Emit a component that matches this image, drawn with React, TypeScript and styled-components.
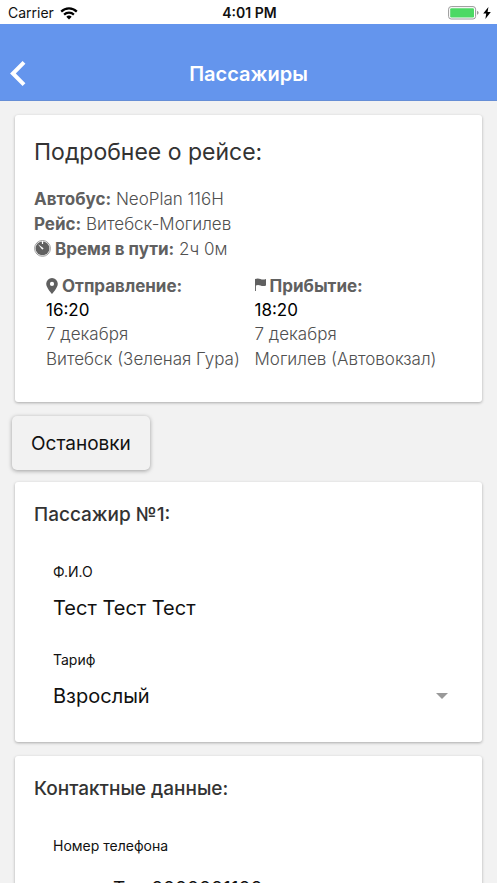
import React from "react";
import styled, { createGlobalStyle } from "styled-components";

const GlobalStyle = createGlobalStyle`
  *, *::before, *::after { box-sizing: border-box; }
  body { margin: 0; background: #f2f2f2; }
  body, button, input, select { font-family: Inter, "Liberation Sans", sans-serif; }
  h1, h2, p { margin: 0; }
`;

const Screen = styled.div`
  display: flex;
  flex-direction: column;
  height: 100vh;
  background: #f2f2f2;
`;

const StatusBar = styled.div`
  display: grid;
  grid-template-columns: 1fr auto 1fr;
  align-items: center;
  flex: none;
  height: 24px;
  padding: 2px 6px 0 8px;
  background: #fff;
  color: #111;
  font-size: 14px;
  line-height: 20px;
`;

const StatusGroup = styled.div<{ $end?: boolean }>`
  display: flex;
  align-items: center;
  gap: ${({ $end }) => ($end ? 4 : 6)}px;
  justify-content: ${({ $end }) => ($end ? "flex-end" : "flex-start")};
`;

const Clock = styled.span`
  font-weight: 600;
`;

const NavBar = styled.header`
  display: grid;
  grid-template-columns: 48px 1fr 48px;
  align-items: center;
  flex: none;
  height: 77px;
  padding-top: 24px;
  background: #6495ed;
  border-bottom: 1px solid #668ed6;
  color: #fff;
`;

const BackButton = styled.button`
  display: flex;
  align-items: center;
  height: 48px;
  padding: 0 0 0 10px;
  border: 0;
  background: none;
  color: inherit;
`;

const NavTitle = styled.h1`
  text-align: center;
  font-size: 20px;
  line-height: 24px;
  font-weight: 600;
`;

const Content = styled.main`
  flex: 1;
  min-height: 0;
  overflow-y: auto;
  scrollbar-width: none;
  padding: 14px 15px;
`;

const Card = styled.section`
  padding: 20px 19px;
  margin-bottom: 14px;
  border-radius: 3px;
  background: #fff;
  box-shadow: 0 1px 3px rgba(0, 0, 0, 0.3);
`;

const CardTitle = styled.h2<{ $large?: boolean }>`
  margin-bottom: ${({ $large }) => ($large ? 18 : 34)}px;
  color: #333;
  font-size: ${({ $large }) => ($large ? 23 : 19)}px;
  line-height: ${({ $large }) => ($large ? 34 : 26)}px;
  font-weight: ${({ $large }) => ($large ? 400 : 500)};
`;

const Line = styled.p`
  color: #505050;
  font-size: 17px;
  line-height: 25px;
  font-weight: 300;
  white-space: nowrap;
`;

const Label = styled.strong`
  color: #606060;
  font-weight: 700;
`;

const IconLine = styled(Line)`
  display: flex;
  align-items: center;
  gap: 4px;
`;

const Stops = styled.div`
  display: grid;
  grid-template-columns: 1fr 1fr;
  gap: 12px;
  padding: 12px 12px 10px;
`;

const Stop = styled.div`
  min-width: 0;
`;

const Time = styled.time`
  display: block;
  color: #000;
  font-size: 17px;
  line-height: 23px;
`;

const StopsButton = styled.button`
  display: block;
  height: 54px;
  padding: 0 19px;
  margin: 0 0 12px -3px;
  border: 0;
  border-radius: 5px;
  background: #f2f2f2;
  box-shadow: 0 1px 4px rgba(0, 0, 0, 0.35);
  color: #111;
  font-size: 19px;
`;

const Fields = styled.div`
  display: flex;
  flex-direction: column;
  gap: 22px;
  padding: 0 15px 6px 19px;
`;

const Field = styled.div<{ $roomy?: boolean }>`
  display: flex;
  flex-direction: column;
  gap: ${({ $roomy }) => ($roomy ? 12 : 6)}px;
`;

const FieldLabel = styled.label`
  color: #111;
  font-size: 14px;
  line-height: 20px;
`;

const Input = styled.input<{ $indented?: boolean }>`
  width: 100%;
  height: 40px;
  padding: 0 0 0 ${({ $indented }) => ($indented ? 60 : 0)}px;
  border: 0;
  background: none;
  color: #111;
  font-size: ${({ $indented }) => ($indented ? 19 : 20)}px;
`;

const SelectBox = styled.div`
  display: grid;
  grid-template-columns: 1fr 12px;
  align-items: center;
`;

const Select = styled.select`
  appearance: none;
  grid-area: 1 / 1 / 2 / 3;
  width: 100%;
  height: 40px;
  padding: 0;
  border: 0;
  background: none;
  color: #111;
  font-size: 20px;
`;

const Arrow = styled.svg`
  grid-area: 1 / 2;
  pointer-events: none;
`;

const WifiIcon = () => (
  <svg width="18" height="13" viewBox="0 0 18 13" fill="none" stroke="#000" strokeWidth="2.2" aria-hidden="true">
    <path d="M1.2 4.6a11 11 0 0 1 15.6 0M4.1 7.6a7 7 0 0 1 9.8 0" />
    <path d="M9 12.5 6.3 9.8a3.9 3.9 0 0 1 5.4 0Z" fill="#000" stroke="none" />
  </svg>
);

const BatteryIcon = () => (
  <svg width="31" height="14" viewBox="0 0 31 14" aria-hidden="true">
    <rect x="0.6" y="0.6" width="27" height="12.4" rx="2.6" fill="#fff" stroke="#999" />
    <rect x="2.2" y="2.2" width="23.8" height="9.2" rx="1.2" fill="#4cd964" />
    <path d="M29 4.8q1.6.4 1.6 2t-1.6 2Z" fill="#999" />
  </svg>
);

const BoltIcon = () => (
  <svg width="8" height="12" viewBox="0 0 8 12" aria-hidden="true">
    <path d="M5.4 0 .2 6.6h3L2.4 12 7.8 5H4.6Z" fill="#000" />
  </svg>
);

const BackIcon = () => (
  <svg width="16" height="26" viewBox="0 0 16 26" fill="none" stroke="#fff" strokeWidth="4" aria-hidden="true">
    <path d="M14 1.4 2.9 12.5 14 23.6" />
  </svg>
);

const TimerIcon = () => (
  <svg width="17" height="20" viewBox="0 0 17 20" aria-hidden="true">
    <circle cx="8.5" cy="8.4" r="7.9" fill="#fff" stroke="#999" />
    <circle cx="8.5" cy="8.4" r="6.9" fill="#606060" />
    <path d="M8.5 1v3" stroke="#fff" strokeWidth="1.2" />
    <path d="m4 4.3 5.2 3.6q.7.9-.3 1.4-.8.3-1.4-.5Z" fill="#fff" />
  </svg>
);

const PinIcon = () => (
  <svg width="12" height="18" viewBox="0 0 12 18" aria-hidden="true">
    <path
      d="M6 0a5.8 5.8 0 0 0-5.8 5.8C.2 10 6 16 6 16S11.8 10 11.8 5.8A5.8 5.8 0 0 0 6 0Zm0 3.8a2.1 2.1 0 1 1 0 4.2 2.1 2.1 0 0 1 0-4.2Z"
      fill="#606060"
      fillRule="evenodd"
    />
  </svg>
);

const FlagIcon = () => (
  <svg width="11" height="18" viewBox="0 0 11 18" aria-hidden="true">
    <path d="M0 1q2.8-1 5.4 0t5.6 0v6.6q-2.8 1-5.5 0t-4.6 0V13H0Z" fill="#606060" />
  </svg>
);

export default function App() {
  return (
    <>
      <GlobalStyle />
      <Screen>
        <StatusBar>
          <StatusGroup>
            Carrier <WifiIcon />
          </StatusGroup>
          <Clock>4:01 PM</Clock>
          <StatusGroup $end>
            <BatteryIcon />
            <BoltIcon />
          </StatusGroup>
        </StatusBar>
        <NavBar>
          <BackButton aria-label="Назад">
            <BackIcon />
          </BackButton>
          <NavTitle>Пассажиры</NavTitle>
        </NavBar>
        <Content>
          <Card>
            <CardTitle $large>Подробнее о рейсе:</CardTitle>
            <Line>
              <Label>Автобус:</Label> NeoPlan 116H
            </Line>
            <Line>
              <Label>Рейс:</Label> Витебск-Могилев
            </Line>
            <IconLine>
              <TimerIcon />
              <span>
                <Label>Время в пути:</Label> 2ч 0м
              </span>
            </IconLine>
            <Stops>
              <Stop>
                <IconLine>
                  <PinIcon />
                  <Label>Отправление:</Label>
                </IconLine>
                <Time>16:20</Time>
                <Line>7 декабря</Line>
                <Line>Витебск (Зеленая Гура)</Line>
              </Stop>
              <Stop>
                <IconLine>
                  <FlagIcon />
                  <Label>Прибытие:</Label>
                </IconLine>
                <Time>18:20</Time>
                <Line>7 декабря</Line>
                <Line>Могилев (Автовокзал)</Line>
              </Stop>
            </Stops>
          </Card>
          <StopsButton>Остановки</StopsButton>
          <Card>
            <CardTitle>Пассажир №1:</CardTitle>
            <Fields>
              <Field>
                <FieldLabel htmlFor="name">Ф.И.О</FieldLabel>
                <Input id="name" defaultValue="Тест Тест Тест" />
              </Field>
              <Field>
                <FieldLabel htmlFor="fare">Тариф</FieldLabel>
                <SelectBox>
                  <Select id="fare">
                    <option>Взрослый</option>
                  </Select>
                  <Arrow width="12" height="6" viewBox="0 0 12 6" aria-hidden="true">
                    <path d="M0 0h12L6 6Z" fill="#999" />
                  </Arrow>
                </SelectBox>
              </Field>
            </Fields>
          </Card>
          <Card>
            <CardTitle>Контактные данные:</CardTitle>
            <Fields>
              <Field $roomy>
                <FieldLabel htmlFor="phone">Номер телефона</FieldLabel>
                <Input id="phone" $indented defaultValue="Тел 0000001100" />
              </Field>
            </Fields>
          </Card>
        </Content>
      </Screen>
    </>
  );
}
